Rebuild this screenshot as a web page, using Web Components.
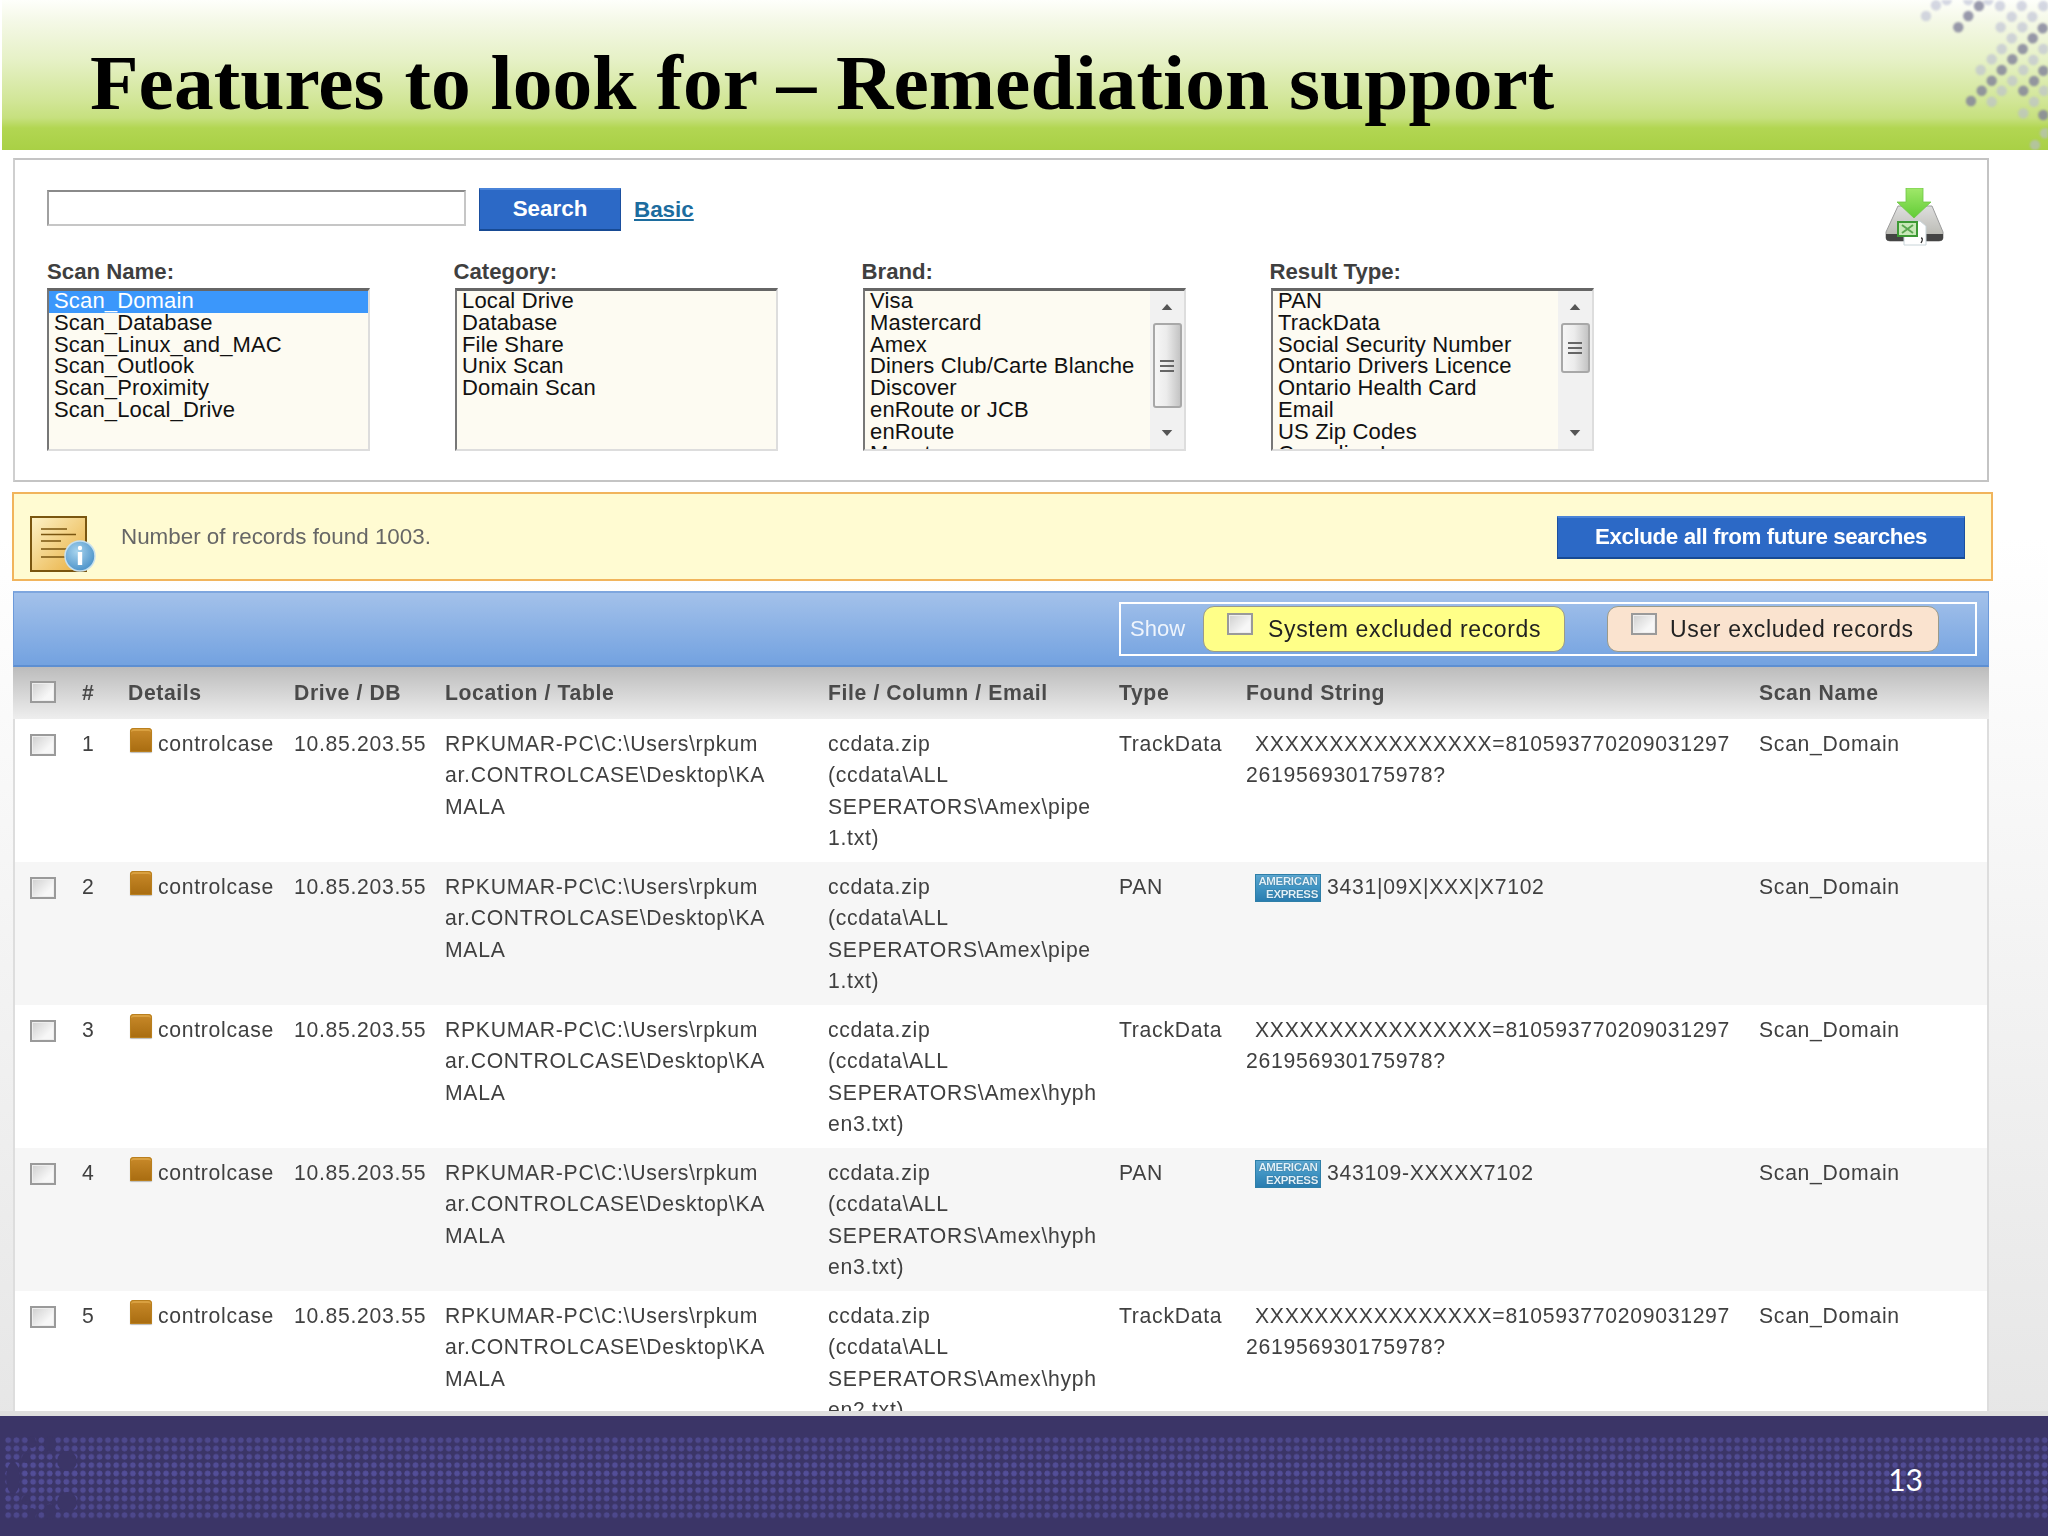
<!DOCTYPE html>
<html lang="en"><head><meta charset="utf-8"><title>Features to look for – Remediation support</title>
<style>
html,body{margin:0;padding:0;background:#fff}
body{width:2048px;height:1536px;overflow:hidden;font-family:"Liberation Sans",Arial,sans-serif}
</style></head><body>
<x-slide>
  <x-slide-header>Features to look for – Remediation support</x-slide-header>
  <x-main>
    <x-search-panel>
      <x-list-box>
        <span slot="label">Scan Name:</span>
        <x-opt selected>Scan_Domain</x-opt><x-opt>Scan_Database</x-opt><x-opt>Scan_Linux_and_MAC</x-opt><x-opt>Scan_Outlook</x-opt><x-opt>Scan_Proximity</x-opt><x-opt>Scan_Local_Drive</x-opt>
      </x-list-box>
      <x-list-box shift>
        <span slot="label">Category:</span>
        <x-opt>Local Drive</x-opt><x-opt>Database</x-opt><x-opt>File Share</x-opt><x-opt>Unix Scan</x-opt><x-opt>Domain Scan</x-opt>
      </x-list-box>
      <x-list-box shift>
        <span slot="label">Brand:</span>
        <x-opt>Visa</x-opt><x-opt>Mastercard</x-opt><x-opt>Amex</x-opt><x-opt>Diners Club/Carte Blanche</x-opt><x-opt>Discover</x-opt><x-opt>enRoute or JCB</x-opt><x-opt>enRoute</x-opt><x-opt>Maestro</x-opt>
        <x-scroll slot="bar" style="--thumb:85px"></x-scroll>
      </x-list-box>
      <x-list-box shift>
        <span slot="label">Result Type:</span>
        <x-opt>PAN</x-opt><x-opt>TrackData</x-opt><x-opt>Social Security Number</x-opt><x-opt>Ontario Drivers Licence</x-opt><x-opt>Ontario Health Card</x-opt><x-opt>Email</x-opt><x-opt>US Zip Codes</x-opt><x-opt>Canadian Insurance</x-opt>
        <x-scroll slot="bar" style="--thumb:50px"></x-scroll>
      </x-list-box>
    </x-search-panel>
    <x-info-bar>Number of records found 1003.</x-info-bar>
    <x-results>
      <x-show-bar></x-show-bar>
      <x-row head><x-check></x-check><span>#</span><span>Details</span><span>Drive / DB</span><span>Location / Table</span><span>File / Column / Email</span><span>Type</span><span>Found String</span><span>Scan Name</span></x-row>
      <x-row><x-check></x-check><span>1</span><span><x-folder></x-folder>controlcase</span><span>10.85.203.55</span><span>RPKUMAR-PC\C:\Users\rpkum<br>ar.CONTROLCASE\Desktop\KA<br>MALA</span><span>ccdata.zip<br>(ccdata\ALL<br>SEPERATORS\Amex\pipe<br>1.txt)</span><span>TrackData</span><span><x-ind></x-ind>XXXXXXXXXXXXXXXX=810593770209031297<br>261956930175978?</span><span>Scan_Domain</span></x-row>
      <x-row alt><x-check></x-check><span>2</span><span><x-folder></x-folder>controlcase</span><span>10.85.203.55</span><span>RPKUMAR-PC\C:\Users\rpkum<br>ar.CONTROLCASE\Desktop\KA<br>MALA</span><span>ccdata.zip<br>(ccdata\ALL<br>SEPERATORS\Amex\pipe<br>1.txt)</span><span>PAN</span><span><x-ind></x-ind><x-amex></x-amex>3431|09X|XXX|X7102</span><span>Scan_Domain</span></x-row>
      <x-row><x-check></x-check><span>3</span><span><x-folder></x-folder>controlcase</span><span>10.85.203.55</span><span>RPKUMAR-PC\C:\Users\rpkum<br>ar.CONTROLCASE\Desktop\KA<br>MALA</span><span>ccdata.zip<br>(ccdata\ALL<br>SEPERATORS\Amex\hyph<br>en3.txt)</span><span>TrackData</span><span><x-ind></x-ind>XXXXXXXXXXXXXXXX=810593770209031297<br>261956930175978?</span><span>Scan_Domain</span></x-row>
      <x-row alt><x-check></x-check><span>4</span><span><x-folder></x-folder>controlcase</span><span>10.85.203.55</span><span>RPKUMAR-PC\C:\Users\rpkum<br>ar.CONTROLCASE\Desktop\KA<br>MALA</span><span>ccdata.zip<br>(ccdata\ALL<br>SEPERATORS\Amex\hyph<br>en3.txt)</span><span>PAN</span><span><x-ind></x-ind><x-amex></x-amex>343109-XXXXX7102</span><span>Scan_Domain</span></x-row>
      <x-row><x-check></x-check><span>5</span><span><x-folder></x-folder>controlcase</span><span>10.85.203.55</span><span>RPKUMAR-PC\C:\Users\rpkum<br>ar.CONTROLCASE\Desktop\KA<br>MALA</span><span>ccdata.zip<br>(ccdata\ALL<br>SEPERATORS\Amex\hyph<br>en2.txt)</span><span>TrackData</span><span><x-ind></x-ind>XXXXXXXXXXXXXXXX=810593770209031297<br>261956930175978?</span><span>Scan_Domain</span></x-row>
    </x-results>
  </x-main>
  <x-slide-footer>13</x-slide-footer>
</x-slide>
<script>
function def(name, html){
  customElements.define(name, class extends HTMLElement{
    constructor(){super();this.attachShadow({mode:'open'}).innerHTML=html;}
  });
}
const FONT='"Liberation Sans",Arial,sans-serif';
def('x-slide',`<style>:host{display:flex;flex-direction:column;width:2048px;height:1536px;overflow:hidden;background:linear-gradient(#fff 35%,#e3e3e3 100%);font-family:${FONT}}</style><slot></slot>`);

const dark=[[357,18],[325,48],[295,82],[518,115],[488,147],[457,178],[425,210],[395,242],[365,272],[333,303],[548,85],[550,212],[490,272],[522,243],[550,345]];
const light=[[228,16],[198,48],[420,18],[485,18],[550,18],[455,50],[517,50],[422,82],[487,82],[455,115],[425,147],[550,147],[395,178],[520,180],[362,210],[490,210],[457,242],[425,272],[395,305],[522,305],[490,340],[552,272],[555,400],[525,435],[260,0],[325,0],[385,0]];
const circ=(a,f,o)=>a.map(p=>`<circle cx="${(p[0]/3).toFixed(1)}" cy="${(p[1]/3).toFixed(1)}" r="5.2" fill="${f}" opacity="${o}"/>`).join('');
def('x-slide-header',`<style>
:host{display:flex;flex:none;height:150px;position:relative;align-items:flex-start;padding-left:88px;box-sizing:border-box;overflow:hidden;
background:linear-gradient(#fefffb 0,#f4f8e6 22px,#e6f1c6 60px,#d2e698 100px,#c6e07e 118px,#b2d652 128px,#a9d045 150px);border-left:2px solid #fff;}
h1{margin:41px 0 0;font:bold 79px/84px "Liberation Serif","Times New Roman",serif;color:#000;white-space:nowrap;transform-origin:0 0;transform:scaleX(1.007);filter:blur(.3px)}
svg{position:absolute;right:0;top:0;width:188px;height:150px;filter:blur(1.1px)}
</style><h1><slot></slot></h1><svg viewBox="0 0 188 150">${circ(light,'#b9bcd4',.6)}${circ(dark,'#7f7f9a',.8)}</svg>`);

def('x-main',`<style>:host{display:flex;flex-direction:column;flex:1;min-height:0;overflow:hidden;padding:8px 59px 0 13px;filter:blur(.35px)}</style><slot></slot>`);

def('x-search-panel',`<style>
:host{display:block;flex:none;height:324px;box-sizing:border-box;border:2px solid #c4c4c4;background:#fff;padding:28px 42px 0 32px;border-left-color:#cfcfcf}
.top{display:flex;align-items:flex-start;height:43px}
input{box-sizing:border-box;width:419px;height:36px;margin:2px 13px 0 0;background:#fff;border:2px solid #c6c6c6;border-top-color:#8a8a8a;border-left-color:#a0a0a0;padding:0}
.btn{box-sizing:border-box;width:142px;height:43px;background:#2c69c6;border:1px solid #1b4f9f;border-top:2px solid #4a83d8;border-bottom:2px solid #174a94;color:#fff;font:bold 22.4px/38px ${FONT};text-align:center}
a{font:bold 22.4px/44px ${FONT};color:#1c6c9e;text-decoration:underline;margin-left:13px}
x-export{margin-left:auto}
.lists{display:flex;gap:85px;margin-top:28px}
</style>
<div class="top"><input aria-label="search"><div class="btn">Search</div><a>Basic</a><x-export></x-export></div>
<div class="lists"><slot></slot></div>`);

def('x-export',`<style>:host{display:block;width:60px;height:58px}svg{display:block;filter:blur(.4px)}</style>
<svg width="60" height="58" viewBox="0 0 60 58">
<defs><linearGradient id="d" x1="0" y1="0" x2="0" y2="1"><stop offset="0" stop-color="#dedede"/><stop offset="1" stop-color="#b4b4ac"/></linearGradient>
<linearGradient id="g" x1="0" y1="0" x2="0" y2="1"><stop offset="0" stop-color="#a0e86a"/><stop offset="1" stop-color="#62cc36"/></linearGradient></defs>
<path d="M13 18 L47 18 L58 44 L58 50 Q58 53 54 53 L5 53 Q1 53 1 50 L1 44 Z" fill="url(#d)" stroke="#9c9c9c"/>
<path d="M1 46 L58 46 L58 50 Q58 53 54 53 L5 53 Q1 53 1 50 Z" fill="#444"/>
<path d="M21 0 H38 V14 H46 L29 30 L12 14 H21 Z" fill="url(#g)" stroke="#6cc644" stroke-width=".8"/>
<path d="M19 33 H35 L41 38 V57 H19 Z" fill="#fff" stroke="#c8d4d8"/>
<rect x="13" y="34" width="19" height="14" fill="#c8e8b8" stroke="#3d9a35" stroke-width="2"/>
<path d="M17 37 L28 45 M28 37 L17 45" stroke="#5aa850" stroke-width="2"/>
<path d="M36 50 q2 0 1 3 l-1 2" fill="none" stroke="#333" stroke-width="1.3"/>
</svg>`);

def('x-list-box',`<style>
:host{display:block;width:323px;flex:none}
.lab{display:block;height:26px;margin-bottom:3px;font:bold 22.2px/26px ${FONT};color:#3f3f3f}
:host([shift]) .lab{margin-left:-1.5px}
.box{box-sizing:border-box;display:flex;height:163px;border-top:3px solid #666;border-left:2px solid #777;border-right:2px solid #ddd;border-bottom:2px solid #ddd;background:#fdfbf2;overflow:hidden}
.opts{flex:1;min-width:0;overflow:hidden}
</style><span class="lab"><slot name="label"></slot></span><div class="box"><div class="opts"><slot></slot></div><slot name="bar"></slot></div>`);

def('x-opt',`<style>:host{display:block;height:21.8px;font:22px/20px ${FONT};letter-spacing:.16px;color:#111;padding-left:5px;white-space:nowrap}
:host([selected]){background:#3b97fb;color:#fff}</style><slot></slot>`);

const tri=d=>`<svg width="12" height="6" viewBox="0 0 14 8" style="display:block"><path d="${d}" fill="#555"/></svg>`;
def('x-scroll',`<style>
:host{display:flex;flex:none;width:34px;flex-direction:column;background:#f1f1f1;align-items:center;box-sizing:border-box}
.arr{height:32px;flex:none;display:flex;align-items:center;justify-content:center}
.th{box-sizing:border-box;width:29px;height:var(--thumb);flex:none;border:2px solid #a8a8a8;border-radius:3px;background:linear-gradient(90deg,#f6f6f6,#ececec 45%,#c4c4c4);display:flex;flex-direction:column;gap:3px;align-items:center;justify-content:center}
.th i{display:block;width:14px;height:2px;background:#666}
.sp{flex:1}
</style><div class="arr">${tri('M7 0 L14 8 H0 Z')}</div><div class="th"><i></i><i></i><i></i></div><div class="sp"></div><div class="arr">${tri('M0 0 H14 L7 8 Z')}</div>`);

def('x-info-icon',`<style>:host{display:block;width:67px;height:57px;flex:none;margin-top:16px}svg{display:block}</style>
<svg width="67" height="57" viewBox="0 0 67 57">
<defs><linearGradient id="p" x1="0" y1="0" x2="1" y2="1"><stop offset="0" stop-color="#fdf3c8"/><stop offset="1" stop-color="#e8ad3c"/></linearGradient>
<radialGradient id="b" cx=".4" cy=".35" r=".8"><stop offset="0" stop-color="#a8d4ee"/><stop offset="1" stop-color="#3b86c2"/></radialGradient></defs>
<rect x="1" y="1" width="55" height="54" fill="url(#p)" stroke="#7a5610" stroke-width="2"/>
<path d="M11 13 H37 M11 18.500 H46 M11 25 H31 M11 33 H40 M11 41 H35" stroke="#7a5610" stroke-width="1.600" fill="none"/>
<circle cx="50" cy="40" r="15" fill="url(#b)" stroke="#c8e0ee" stroke-width="1.500"/>
<circle cx="50" cy="32" r="2.200" fill="#fff"/><rect x="47.800" y="36" width="4.400" height="13" fill="#fff"/>
</svg>`);

def('x-info-bar',`<style>
:host{display:flex;flex:none;height:89px;box-sizing:border-box;margin:10px -4px 10px -1px;align-items:center;background:#fffbd2;border:2px solid #f1b45c;padding:0 26px 0 16px;font:22.4px ${FONT};color:#666}
.t{margin-left:24px;flex:1}
.b{box-sizing:border-box;width:408px;height:43px;background:#2c69c6;border:1px solid #1b4f9f;border-top:2px solid #4a83d8;border-bottom:2px solid #174a94;color:#fff;font:bold 22.4px/37px ${FONT};letter-spacing:-.44px;text-align:center;margin-top:2px}
</style><x-info-icon></x-info-icon><div class="t"><slot></slot></div><div class="b">Exclude all from future searches</div>`);

def('x-results',`<style>:host{display:block;flex:none}</style><slot></slot>`);

def('x-show-bar',`<style>
:host{display:flex;height:76px;box-sizing:border-box;justify-content:flex-end;align-items:center;padding:0 11px 0 0;background:linear-gradient(#a3c1ea,#73a2e0);border:1px solid #6d9ada;border-top:2px solid #7ea6de;border-bottom:2px solid #5d8fd2}
.f{box-sizing:border-box;width:858px;height:54px;border:2px solid #fff;display:flex;align-items:center;padding-left:9px;gap:18px}
.s{width:55px;font:22px ${FONT};color:#eef4fc}
</style><div class="f"><span class="s">Show</span><x-pill style="--bg:#ffff88;--w:362px;--g:15px">System excluded records</x-pill><x-pill style="--bg:#fae3cf;--w:332px;--g:13px;margin-left:24px">User excluded records</x-pill></div>`);

def('x-pill',`<style>
:host{display:flex;box-sizing:border-box;width:var(--w);height:46px;background:var(--bg);border:1.500px solid #9a9a8a;border-radius:11px;align-items:center;padding-left:23px;gap:var(--g);font:23px ${FONT};letter-spacing:.65px;color:#222;white-space:nowrap}
x-check{margin-top:-10px}
</style><x-check style="--w:26px"></x-check><span><slot></slot></span>`);

def('x-check',`<style>:host{display:block;box-sizing:border-box;width:var(--w,26px);height:22px;border:2px solid #9a9a9a;background:linear-gradient(135deg,#cfcfcf,#f7f7f7 70%);box-shadow:inset 0 0 0 1px #eee}</style>`);

def('x-folder',`<style>:host{display:inline-block;width:22px;height:24px;margin:0 6px 0 2px;vertical-align:-1px;border-radius:4px 4px 1px 1px;background:linear-gradient(#c98a2a,#a86c10);box-shadow:inset 0 0 0 1px #b97f1e,inset 0 3px 0 #d9a040,0 1px 1px #bbb;position:relative;top:-8px;margin-bottom:-8px}</style>`);

def('x-ind',`<style>:host{display:inline-block;width:9px}</style>`);

def('x-amex',`<style>
:host{display:inline-flex;flex-direction:column;box-sizing:border-box;width:66px;height:28px;margin:3px 6px 0 0;vertical-align:top;background:linear-gradient(#5aa6d0 0,#3f93c2 50%,#2a7db0 100%);color:#dff1fa;font:bold 11.500px/12.500px ${FONT};padding:0 1px;border:1px solid #2f7fa8;overflow:hidden;letter-spacing:-.35px}
.a{text-shadow:0 0 1px #12425f;display:block;text-align:center}
.b{text-shadow:0 0 1px #12425f;display:block;text-align:right;padding-right:1px}
</style><span class="a">AMERICAN</span><span class="b">EXPRESS</span>`);

def('x-row',`<style>
:host{display:grid;grid-template-columns:52px 46px 166px 151px 383px 291px 127px 513px 1fr;height:143px;box-sizing:border-box;padding:9px 0 0 15px;background:#fff;border-left:2px solid #ddd;border-right:2px solid #ddd;font:21.200px/31.400px ${FONT};letter-spacing:.7px;color:#404040;white-space:nowrap;align-content:start}
:host([alt]){background:#f6f6f6}
:host([head]){height:52px;padding-top:0;align-content:center;align-items:center;background:linear-gradient(#bcbcbc,#eeeeee);font-weight:bold;color:#4a4a4a;border-color:transparent;letter-spacing:.6px}
::slotted(x-check){margin-top:6px}
:host([head]) ::slotted(x-check){margin-top:-2px}
</style><slot></slot>`);

def('x-slide-footer',`<style>
:host{display:block;flex:none;height:125px;box-sizing:border-box;border-top:5px solid #dedede;background:#3b3567;padding-top:20px;position:relative;z-index:1}
.band{box-sizing:border-box;height:83.300px;display:flex;align-items:center;justify-content:flex-end;padding:3px 125px 0 0;margin-left:4px;position:relative;
background:radial-gradient(circle,#544f9a 2.600px,transparent 3.100px) 0 0/8.320px 8.330px;color:#fff;font:30px Lato,"Open Sans",sans-serif}
svg{position:absolute;left:-4px;top:0;width:100px;height:84px;filter:blur(.5px)}
.fade{position:absolute;inset:0;background:linear-gradient(rgba(59,53,103,.3),rgba(59,53,103,.04) 45%,rgba(59,53,103,.3))}
span{position:relative}
</style><div class="band"><div class="fade"></div>
<svg viewBox="0 0 100 84" fill="#3b3567"><ellipse cx="32" cy="6" rx="4" ry="6"/><ellipse cx="50" cy="8" rx="6" ry="8"/><ellipse cx="67" cy="25" rx="10" ry="10"/><ellipse cx="13" cy="42" rx="7" ry="16"/><ellipse cx="67" cy="66" rx="10" ry="10"/><ellipse cx="32" cy="78" rx="4" ry="6"/><ellipse cx="50" cy="76" rx="6" ry="8"/><ellipse cx="26" cy="22" rx="4" ry="5"/><ellipse cx="26" cy="64" rx="4" ry="5"/></svg>
<span><slot></slot></span></div>`);
</script>
</body></html>
